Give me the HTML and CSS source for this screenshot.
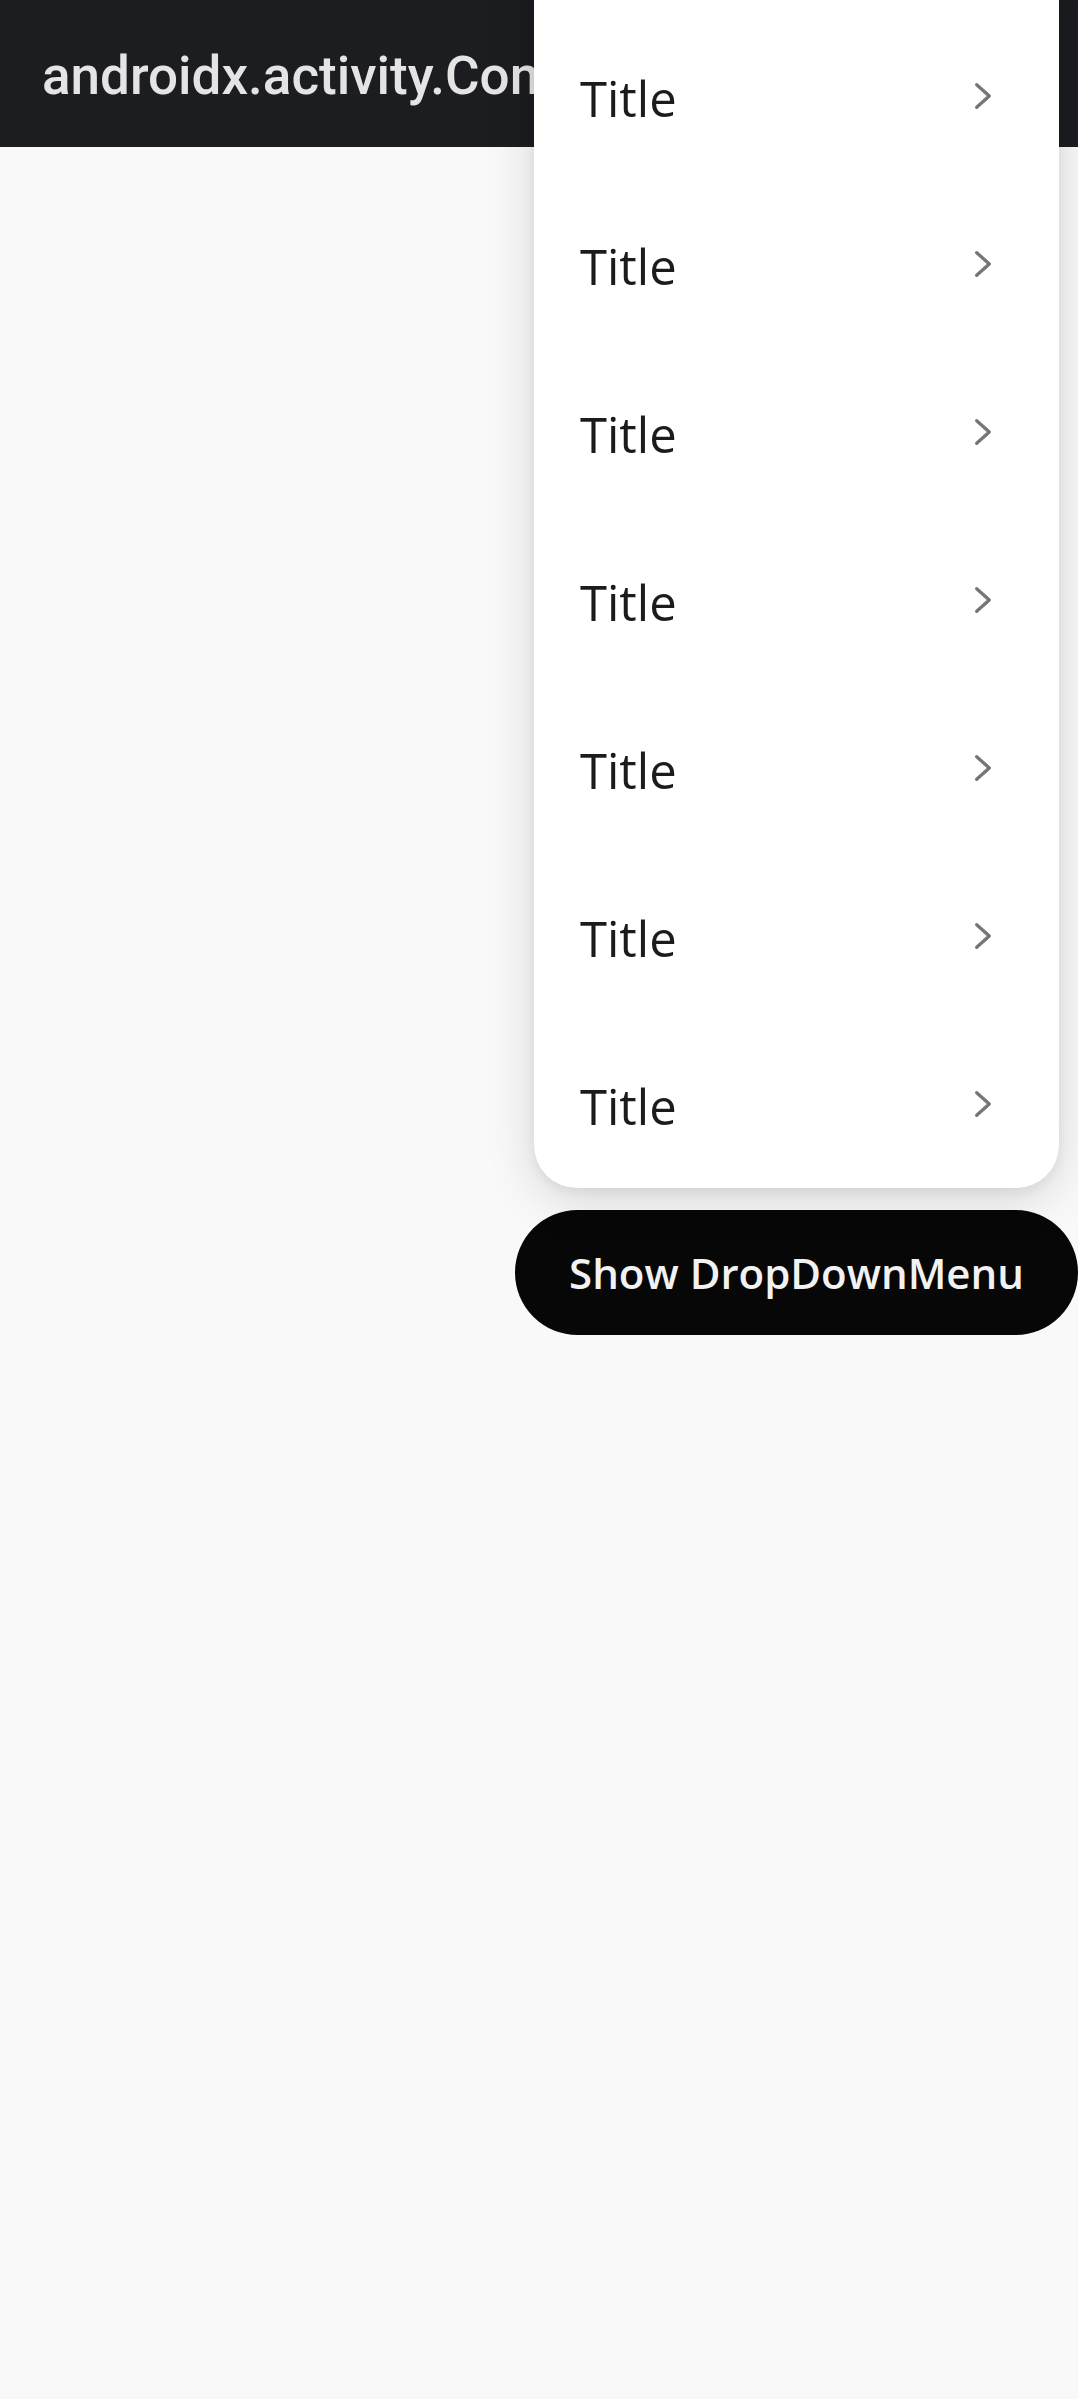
FILE: index.html
```html
<!DOCTYPE html>
<html lang="en">
<head>
<meta charset="utf-8">
<title>DropDownMenu</title>
<link rel="stylesheet" href="styles.css">
</head>
<body>
  <header class="topbar">
    <h1 class="topbar-title">androidx.activity.ComponentActivity</h1>
  </header>
  <main class="stage">
    <div class="anchor">
      <ul class="menu">
        <li class="menu-item"><span class="menu-label">Title</span><svg class="chev" viewBox="0 0 30 30" width="30" height="30"><polyline points="8.7,3.7 21.3,15 8.7,26.3"/></svg></li>
        <li class="menu-item"><span class="menu-label">Title</span><svg class="chev" viewBox="0 0 30 30" width="30" height="30"><polyline points="8.7,3.7 21.3,15 8.7,26.3"/></svg></li>
        <li class="menu-item"><span class="menu-label">Title</span><svg class="chev" viewBox="0 0 30 30" width="30" height="30"><polyline points="8.7,3.7 21.3,15 8.7,26.3"/></svg></li>
        <li class="menu-item"><span class="menu-label">Title</span><svg class="chev" viewBox="0 0 30 30" width="30" height="30"><polyline points="8.7,3.7 21.3,15 8.7,26.3"/></svg></li>
        <li class="menu-item"><span class="menu-label">Title</span><svg class="chev" viewBox="0 0 30 30" width="30" height="30"><polyline points="8.7,3.7 21.3,15 8.7,26.3"/></svg></li>
        <li class="menu-item"><span class="menu-label">Title</span><svg class="chev" viewBox="0 0 30 30" width="30" height="30"><polyline points="8.7,3.7 21.3,15 8.7,26.3"/></svg></li>
        <li class="menu-item"><span class="menu-label">Title</span><svg class="chev" viewBox="0 0 30 30" width="30" height="30"><polyline points="8.7,3.7 21.3,15 8.7,26.3"/></svg></li>
      </ul>
      <button class="show-btn" type="button">Show DropDownMenu</button>
    </div>
  </main>
</body>
</html>
```

FILE: styles.css
```css
html, body {
  margin: 0;
  padding: 0;
}

body {
  background: #f9f9f9;
  min-height: 100vh;
  overflow: hidden;
}

.topbar {
  height: 147px;
  box-sizing: border-box;
  background: #1b1d20;
  display: flex;
  align-items: center;
  padding: 5px 0 0 42px;
  overflow: hidden;
}

.topbar-title {
  margin: 0;
  font-family: Roboto, "Liberation Sans", sans-serif;
  font-weight: 500;
  font-size: 53px;
  color: #e4e4e4;
  white-space: nowrap;
  letter-spacing: 0;
}

.stage {
  display: flex;
  justify-content: flex-end;
  padding-top: 1063px;
}

.anchor {
  position: relative;
}

.menu {
  position: absolute;
  right: 19px;
  bottom: calc(100% + 22px);
  width: 525px;
  margin: 0;
  padding: 80px 0 0 0;
  list-style: none;
  background: #ffffff;
  border-radius: 43px;
  box-shadow: 0 12px 50px rgba(0, 0, 0, 0.14), 0 4px 12px rgba(0, 0, 0, 0.06);
}

.menu-item {
  height: 168px;
  box-sizing: border-box;
  display: flex;
  align-items: center;
  justify-content: space-between;
  padding: 0 61px 0 46px;
}

.menu-label {
  font-family: "Open Sans", "Noto Sans", sans-serif;
  font-size: 49px;
  color: #1b1b1b;
  padding-top: 4px;
}

.chev {
  display: block;
  fill: none;
  stroke: #757575;
  stroke-width: 3.3;
  stroke-linecap: round;
  stroke-linejoin: round;
}

.show-btn {
  display: flex;
  align-items: center;
  justify-content: center;
  width: 563px;
  height: 125px;
  border: none;
  border-radius: 63px;
  background: #070707;
  color: #f2f2f2;
  font-family: "Open Sans", "Noto Sans", sans-serif;
  font-weight: 600;
  font-size: 42px;
  padding: 0;
  margin: 0;
}
```
